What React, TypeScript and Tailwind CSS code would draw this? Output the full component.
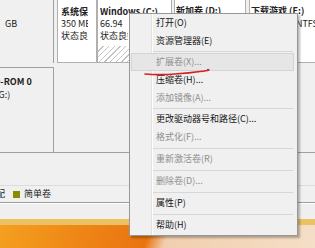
import React from 'react';

type Item = { label: string; disabled?: boolean; active?: boolean } | { sep: number };

const menu: Item[] = [
  { label: '打开(O)' },
  { label: '资源管理器(E)' },
  { sep: 3 },
  { label: '扩展卷(X)...', disabled: true, active: true },
  { label: '压缩卷(H)...' },
  { label: '添加镜像(A)...', disabled: true },
  { sep: 3 },
  { label: '更改驱动器号和路径(C)...' },
  { label: '格式化(F)...', disabled: true },
  { sep: 4 },
  { label: '重新激活卷(R)', disabled: true },
  { sep: 4 },
  { label: '删除卷(D)...', disabled: true },
  { sep: 4 },
  { label: '属性(P)' },
  { sep: 4 },
  { label: '帮助(H)' },
];

function ContextMenu() {
  return (
    <div className="absolute left-[129px] top-[13px] w-[169px] border border-[#979797] pb-[1px] shadow-[2px_2px_2px_rgba(0,0,0,0.28)] bg-[linear-gradient(to_right,#f0f0f0_21px,#e2e2e2_21px,#e2e2e2_22px,#ffffff_22px,#ffffff_23px,#f0f0f0_23px)]">
      {menu.map((it, i) =>
        'sep' in it ? (
          <div key={i} className="flex items-center" style={{ height: it.sep }}>
            <div className="h-px flex-1 ml-[23px] mr-[4px] bg-[#d7d7d7]" />
          </div>
        ) : (
          <div
            key={i}
            className={
              'h-[18px] ml-[1px] mr-[3px] pl-[24px] flex items-center border ' +
              (it.active ? 'bg-[#e6e6e6] border-[#d4d4d4] ' : 'border-transparent ') +
              (it.disabled ? 'text-[#8e8e8e]' : 'text-[#161616]')
            }
          >
            {it.label}
          </div>
        )
      )}
    </div>
  );
}

export default function App() {
  return (
    <div className="relative w-[315px] h-[248px] overflow-hidden bg-[#f0f0f0] font-['Noto_Sans_CJK_SC',sans-serif] text-[9px] leading-[12px] text-[#222]">
      <div className="flex flex-col h-full">
        {/* disk 0 */}
        <div className="flex h-[63px] shrink-0">
          <div className="w-[54px] shrink-0 border-r border-[#a0a0a0] pl-[5px] pt-[18px]">GB</div>
          <div className="w-[3px] shrink-0" />
          <div className="w-[40px] shrink-0 bg-white border-x border-b border-[#b0b0b0] pl-[3px] pr-[8px] pt-[6px] overflow-hidden whitespace-nowrap">
            <div className="font-bold overflow-hidden">系统保留</div>
            <div className="overflow-hidden">350 MB</div>
            <div className="overflow-hidden">状态良好</div>
          </div>
          <div className="w-[75px] shrink-0 border-x border-b border-[#b0b0b0] flex flex-col bg-[repeating-linear-gradient(135deg,#c4c4c4_0px,#c4c4c4_1px,#ffffff_1px,#ffffff_4px)]">
            <div className="bg-white pl-[2px] pt-[6px] pb-[4px] whitespace-nowrap">
              <div className="font-bold">Windows (C:)</div>
              <div>66.94</div>
              <div className="w-[28px] overflow-hidden">状态良好</div>
            </div>
          </div>
          <div className="w-[2px] shrink-0" />
          <div className="w-[72px] shrink-0 bg-white border-x border-b border-[#b0b0b0] pl-[1px] pt-[5px]">
            <div className="font-bold whitespace-nowrap">新加卷 (D:)</div>
          </div>
          <div className="w-[3px] shrink-0" />
          <div className="flex-1 min-w-0 bg-white border-l border-b border-[#b0b0b0] pt-[5px] whitespace-nowrap overflow-hidden">
            <div className="pl-[1px] font-bold">下载游戏 (E:)</div>
            <div className="flex justify-end pt-[1px]">
              <span className="mr-[-3px]">NTFS</span>
            </div>
          </div>
        </div>

        <div className="h-[4px] shrink-0" />

        {/* CD-ROM 0 */}
        <div className="flex h-[86px] shrink-0 border-b border-[#a0a0a0]">
          <div className="w-[54px] shrink-0 border-t border-r border-[#a0a0a0] pt-[8px] whitespace-nowrap overflow-hidden">
            <div className="font-bold ml-[-12px]">CD-ROM 0</div>
            <div className="ml-[-24px] mt-[1px]">DVD (G:)</div>
          </div>
          <div className="flex-1" />
        </div>

        <div className="flex-1" />

        {/* legend */}
        <div className="h-[18px] shrink-0 border-t border-[#dcdcdc] border-b border-b-[#9c9c9c] flex items-center whitespace-nowrap">
          <span className="ml-[-4px]">配</span>
          <span className="ml-[8px] w-[7px] h-[7px] bg-[#8a8c00]" />
          <span className="ml-[4px]">简单卷</span>
        </div>
        <div className="h-[16px] shrink-0 border-t border-white bg-[#efefef]" />
        <div className="h-[6px] shrink-0 bg-[#eac262]" />
        <div className="h-[23px] shrink-0 bg-[linear-gradient(110deg,#f4a020_0%,#ee8716_25%,#e9730f_47%,#f1cfae_53%,#f5dfc7_100%)]" />
      </div>

      <ContextMenu />

      <svg className="absolute left-0 top-0" width="315" height="248" viewBox="0 0 315 248">
        <path d="M145 74 C 160 75.5, 185 73.5, 200 71.5 S 206 70, 208 69.5" fill="none" stroke="#d42222" strokeWidth="1.6" strokeLinecap="round" />
      </svg>
    </div>
  );
}
